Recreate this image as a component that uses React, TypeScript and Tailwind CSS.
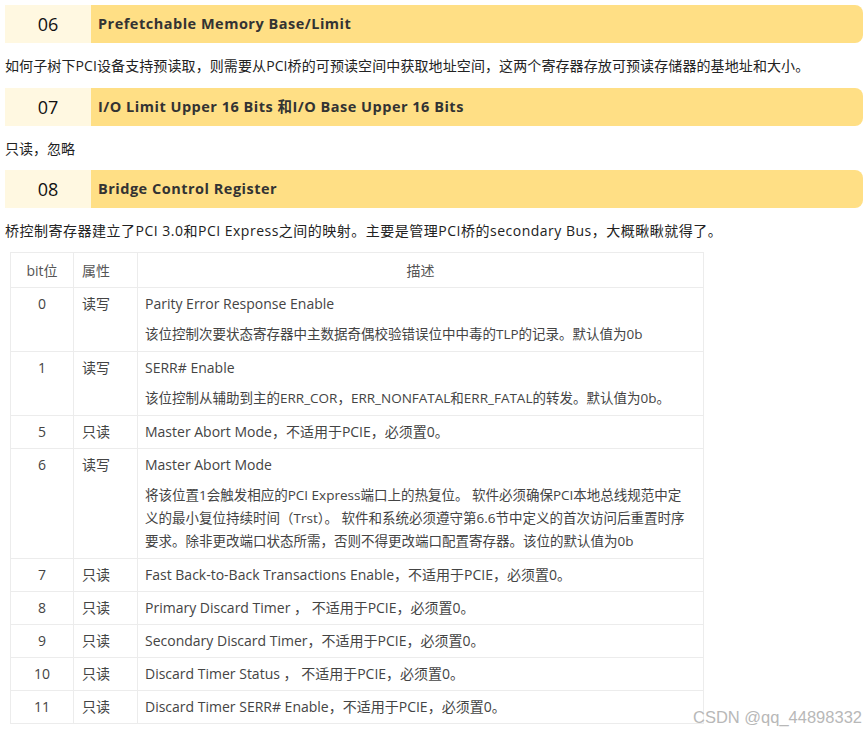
import React from 'react';

const font = { fontFamily: '"Open Sans", "Noto Sans CJK SC", sans-serif' };

const SectionHeader = ({ num, title }: { num: string; title: string }) => (
  <div className="flex h-[38px] ml-[5px] mr-[2px]">
    <div className="w-[86px] flex items-center justify-center bg-[#fff8e1] text-[18px] text-[#111]">{num}</div>
    <div className="flex-1 flex items-center pl-[7px] bg-[#ffdf85] rounded-r-lg text-[14.5px] font-bold tracking-[0.5px] text-[#333]">
      {title}
    </div>
  </div>
);

type Row = { bit: string; attr: string; lines: string[]; desc?: string[] };

const rows: Row[] = [
  {
    bit: '0',
    attr: '读写',
    lines: ['Parity Error Response Enable'],
    desc: ['该位控制次要状态寄存器中主数据奇偶校验错误位中中毒的TLP的记录。默认值为0b'],
  },
  {
    bit: '1',
    attr: '读写',
    lines: ['SERR# Enable'],
    desc: ['该位控制从辅助到主的ERR_COR，ERR_NONFATAL和ERR_FATAL的转发。默认值为0b。'],
  },
  { bit: '5', attr: '只读', lines: ['Master Abort Mode，不适用于PCIE，必须置0。'] },
  {
    bit: '6',
    attr: '读写',
    lines: ['Master Abort Mode'],
    desc: [
      '将该位置1会触发相应的PCI Express端口上的热复位。 软件必须确保PCI本地总线规范中定',
      '义的最小复位持续时间（Trst）。 软件和系统必须遵守第6.6节中定义的首次访问后重置时序',
      '要求。除非更改端口状态所需，否则不得更改端口配置寄存器。该位的默认值为0b',
    ],
  },
  { bit: '7', attr: '只读', lines: ['Fast Back-to-Back Transactions Enable，不适用于PCIE，必须置0。'] },
  { bit: '8', attr: '只读', lines: ['Primary Discard Timer ， 不适用于PCIE，必须置0。'] },
  { bit: '9', attr: '只读', lines: ['Secondary Discard Timer，不适用于PCIE，必须置0。'] },
  { bit: '10', attr: '只读', lines: ['Discard Timer Status ， 不适用于PCIE，必须置0。'] },
  { bit: '11', attr: '只读', lines: ['Discard Timer SERR# Enable，不适用于PCIE，必须置0。'] },
];

export default function App() {
  return (
    <div className="relative w-[865px] h-[732px] bg-white overflow-hidden text-[#222]" style={font}>
      <div className="pt-[5px]">
        <SectionHeader num="06" title="Prefetchable Memory Base/Limit" />
        <p className="h-[45px] flex items-center pl-[5px] text-[14px] tracking-[0.1px]">
          如何子树下PCI设备支持预读取，则需要从PCI桥的可预读空间中获取地址空间，这两个寄存器存放可预读存储器的基地址和大小。
        </p>
        <SectionHeader num="07" title="I/O Limit Upper 16 Bits 和I/O Base Upper 16 Bits" />
        <p className="h-[44px] flex items-center pl-[5px] text-[14px]">只读，忽略</p>
        <SectionHeader num="08" title="Bridge Control Register" />
        <p className="h-[44px] flex items-center pl-[5px] text-[14px] tracking-[0.5px]">
          桥控制寄存器建立了PCI 3.0和PCI Express之间的映射。主要是管理PCI桥的secondary Bus，大概瞅瞅就得了。
        </p>
        <table className="ml-[10px] w-[694px] border-collapse text-[14px] text-[#444]">
          <thead>
            <tr className="h-[35px]">
              <th className="w-[63px] border border-[#ececec] font-normal text-center text-[#555]">bit位</th>
              <th className="w-[64px] border border-[#ececec] font-normal text-left pl-[8px] text-[#555]">属性</th>
              <th className="border border-[#ececec] font-normal text-center text-[#555]">描述</th>
            </tr>
          </thead>
          <tbody>
            {rows.map((r) => (
              <tr key={r.bit}>
                <td className="border border-[#ececec] text-center align-top py-[5px] leading-[22px]">{r.bit}</td>
                <td className="border border-[#ececec] align-top pl-[8px] py-[5px] leading-[22px]">{r.attr}</td>
                <td className="border border-[#ececec] align-top px-[7px] py-[5px] leading-[22px]">
                  {r.lines.map((l) => (
                    <div key={l}>{l}</div>
                  ))}
                  {r.desc && (
                    <div className="mt-[8px] text-[13.5px] leading-[23px]">
                      {r.desc.map((l) => (
                        <div key={l}>{l}</div>
                      ))}
                    </div>
                  )}
                </td>
              </tr>
            ))}
          </tbody>
        </table>
      </div>
      <div
        className="absolute right-[3px] bottom-[5px] text-[16.5px] leading-[20px] text-[#b8b8b8]"
        style={{ fontFamily: '"Liberation Sans", Arial, sans-serif' }}
      >
        CSDN @qq_44898332
      </div>
    </div>
  );
}
